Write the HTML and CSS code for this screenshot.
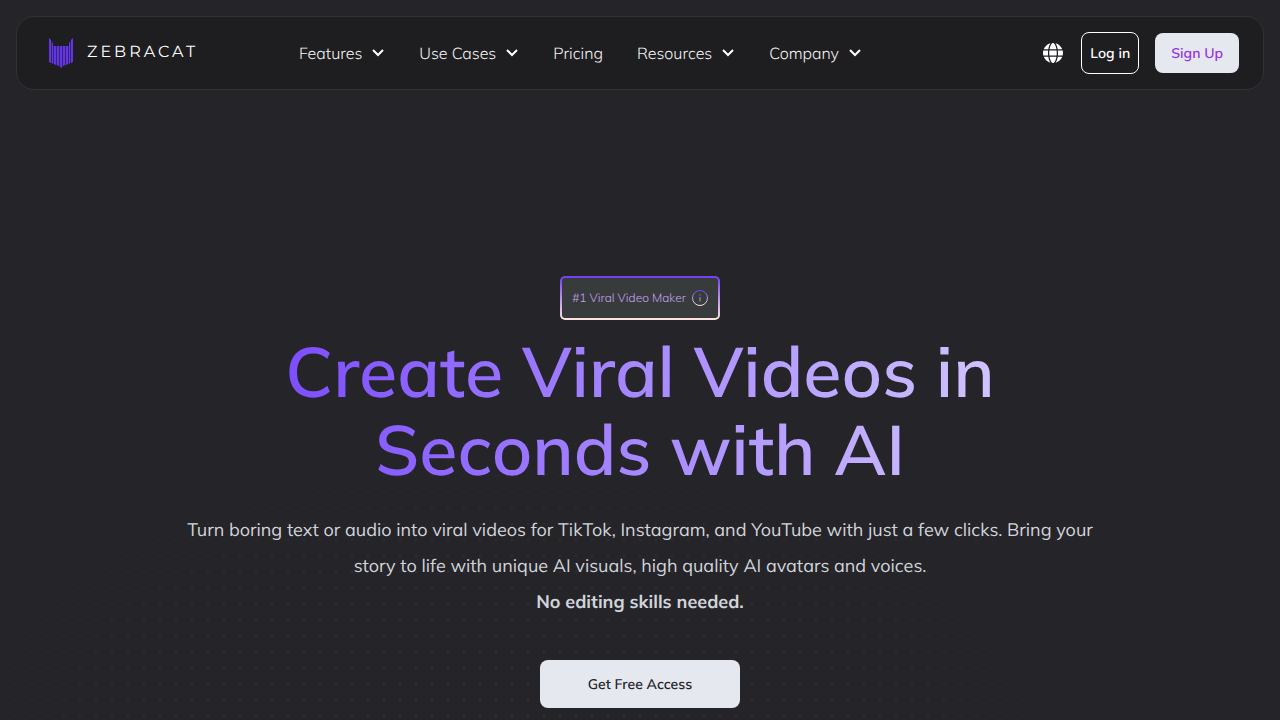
FILE: index.html
```
<!DOCTYPE html>
<html lang="en">
<head>
    <meta charset="UTF-8">
    <meta name="viewport" content="width=device-width, initial-scale=1.0">
    <title>Zebracat</title>
    <link rel="stylesheet" href="styles.css">
</head>
<body>

<header class="navbar">
    <a href="#" class="logo" aria-label="Zebracat">
        <svg class="logo-mark" viewBox="0 0 24 30" aria-hidden="true">
            <path fill="#38217f" d="M0 0L4 5V8H20V5L24 0V24L12 29L0 24Z"/>
            <path fill="#6236dd" d="M0 0L2 2V25L0 24ZM3 4L4 6V26L3 25ZM5 8H7V27L5 26ZM8 8H10V28L8 27ZM11 8H13V29L12 30L11 29ZM14 8H16V27L14 28ZM17 8H19V26L17 27ZM20 5L21 4V25L20 26ZM22 2L24 0V24L22 25Z"/>
        </svg>
        <span class="logo-name">ZEBRACAT</span>
    </a>
    <nav class="menu">
        <button class="menu-item">Features <svg class="chevron" viewBox="0 0 14 8"><path d="M2 1L7 6L12 1"/></svg></button>
        <button class="menu-item">Use Cases <svg class="chevron" viewBox="0 0 14 8"><path d="M2 1L7 6L12 1"/></svg></button>
        <a href="#" class="menu-item">Pricing</a>
        <button class="menu-item">Resources <svg class="chevron" viewBox="0 0 14 8"><path d="M2 1L7 6L12 1"/></svg></button>
        <button class="menu-item">Company <svg class="chevron" viewBox="0 0 14 8"><path d="M2 1L7 6L12 1"/></svg></button>
    </nav>
    <div class="actions">
        <button class="language" aria-label="Language">
            <svg viewBox="0 0 512 512"><path d="M352 256c0 22.200-1.200 43.600-3.300 64H163.300c-2.200-20.400-3.300-41.800-3.300-64s1.200-43.600 3.300-64h185.400c2.200 20.400 3.300 41.800 3.300 64zm28.800-64h123.100c5.300 20.500 8.100 41.900 8.100 64s-2.800 43.500-8.100 64H380.800c2.100-20.600 3.200-42 3.200-64s-1.100-43.400-3.200-64zm112.600-32H376.700c-10-63.900-29.800-117.400-55.300-151.600 78.300 20.700 142 77.500 171.900 151.600zm-149.100 0H167.700c6.100-36.400 15.500-68.600 27-94.700 10.500-23.600 22.200-40.700 33.500-51.500C239.400 3.200 248.700 0 256 0s16.600 3.200 27.800 13.800c11.300 10.800 23 27.900 33.500 51.500 11.600 26 20.900 58.200 27 94.700zm-209 0H18.600C48.600 85.900 112.200 29.100 190.600 8.400 165.100 42.600 145.300 96.100 135.300 160zM8.100 192h123.100c-2.100 20.600-3.200 42-3.200 64s1.100 43.400 3.200 64H8.100C2.800 299.500 0 278.100 0 256s2.800-43.500 8.100-64zM194.700 446.600c-11.600-26-20.900-58.200-27-94.600h176.600c-6.100 36.400-15.500 68.600-27 94.600-10.500 23.600-22.200 40.700-33.500 51.500C272.600 508.800 263.300 512 256 512s-16.600-3.200-27.800-13.800c-11.300-10.800-23-27.900-33.500-51.600zM135.300 352c10 63.900 29.800 117.400 55.300 151.600C112.200 482.900 48.600 426.100 18.600 352h116.700zm358.100 0c-30 74.100-93.600 130.900-171.900 151.600 25.500-34.200 45.200-87.700 55.300-151.600h116.600z"/></svg>
        </button>
        <button class="btn btn-outline">Log in</button>
        <button class="btn btn-light">Sign Up</button>
    </div>
</header>

<main class="hero">
    <div class="badge">
        <span class="badge-text">#1 Viral Video Maker</span>
        <svg class="info" viewBox="0 0 16 16" aria-hidden="true">
            <defs>
                <linearGradient id="ring" x1="0" y1="0" x2="0" y2="1">
                    <stop offset="0" stop-color="#6f3ff5"/>
                    <stop offset="1" stop-color="#ffe4e0"/>
                </linearGradient>
            </defs>
            <circle cx="8" cy="8" r="7.500" fill="none" stroke="url(#ring)"/>
            <path fill="#a98bd8" d="M7.500 4.500h1v1h-1zM7.500 7h1v4.500h-1z"/>
        </svg>
    </div>
    <h1>Create Viral Videos in Seconds with AI</h1>
    <p class="lead">Turn boring text or audio into viral videos for TikTok, Instagram, and YouTube with just a few clicks. Bring your story to life with unique AI visuals, high quality AI avatars and voices.<br><strong>No editing skills needed.</strong></p>
    <button class="cta">Get Free Access</button>
</main>

</body>
</html>
```
FILE: styles.css
```
* {
    box-sizing: border-box;
}

body {
    margin: 0;
    padding: 16px;
    min-height: 100vh;
    font-family: Mulish, Lato, sans-serif;
    text-rendering: geometricPrecision;
    color: #d1d5db;
    background-color: #252429;
    /* dot grid, fading out away from the bottom centre */
    background-image:
        radial-gradient(ellipse 900px 440px at 40% 720px, rgba(37, 36, 41, 0), #252429),
        radial-gradient(circle at 8px 8px, #333337 1px, transparent 1px);
    background-size: auto, 16px 16px;
    background-position: 0 0, 8px 4px;
}

button {
    font-family: inherit;
    text-rendering: inherit;
    cursor: pointer;
}

.navbar {
    display: flex;
    align-items: center;
    padding: 15px 24px 15px 32px;
    background: #1e1e20;
    border: 1px solid #323234;
    border-radius: 18px;
}

.logo {
    display: flex;
    align-items: center;
    gap: 14px;
    width: 150px;
    color: #fff;
    text-decoration: none;
}

.logo-mark {
    width: 24px;
    height: 30px;
}

.logo-name {
    font-family: Montserrat, Lato, sans-serif;
    font-size: 16px;
    line-height: 22px;
    letter-spacing: 3px;
}

.menu {
    display: flex;
    gap: 34px;
    margin-left: 100px;
}

.menu-item {
    display: flex;
    align-items: center;
    gap: 9px;
    padding: 0;
    border: none;
    background: none;
    color: #f3f4f6;
    font-size: 16px;
    font-weight: 300;
    line-height: 24px;
    text-decoration: none;
}

.chevron {
    width: 14px;
    height: 8px;
    fill: none;
    stroke: #fff;
    stroke-width: 2;
}

.actions {
    display: flex;
    align-items: center;
    gap: 16px;
    margin-left: auto;
}

.language {
    width: 24px;
    height: 24px;
    padding: 2px;
    border: none;
    background: none;
}

.language svg {
    display: block;
    width: 20px;
    height: 20px;
    fill: #fff;
}

.btn {
    border-radius: 8px;
    font-size: 14px;
    font-weight: 600;
}

.btn-outline {
    height: 42px;
    padding: 0 8px;
    border: 1px solid #fff;
    background: none;
    color: #fff;
}

.btn-light {
    height: 40px;
    padding: 0 16px;
    border: none;
    background: #e5e8ee;
    color: #9333ea;
}

.hero {
    display: flex;
    flex-direction: column;
    align-items: center;
    padding-top: 186px;
    text-align: center;
}

.badge {
    display: flex;
    align-items: center;
    gap: 6px;
    height: 44px;
    padding: 0 10px;
    border: 2px solid transparent;
    border-radius: 5px;
    background:
        linear-gradient(#383b3c, #383b3c) padding-box,
        linear-gradient(#6f3ff5, #ffe4e0) border-box;
}

.badge-text {
    color: #c4a1f0;
    font-size: 12px;
    font-weight: 300;
    line-height: 16px;
}

.info {
    width: 16px;
    height: 16px;
}

h1 {
    max-width: 720px;
    margin: 12px 0 0;
    font-size: 70px;
    font-weight: 600;
    line-height: 78px;
    color: transparent;
    background: linear-gradient(to right, #7c4dff, #d1c4ff);
    background-clip: text;
    -webkit-background-clip: text;
}

.lead {
    max-width: 930px;
    margin: 24px 0 0;
    font-size: 18px;
    line-height: 36px;
}

.cta {
    width: 200px;
    height: 48px;
    margin-top: 40px;
    border: none;
    border-radius: 8px;
    background: #e5e8ee;
    color: #252429;
    font-size: 14px;
    font-weight: 600;
}
```
